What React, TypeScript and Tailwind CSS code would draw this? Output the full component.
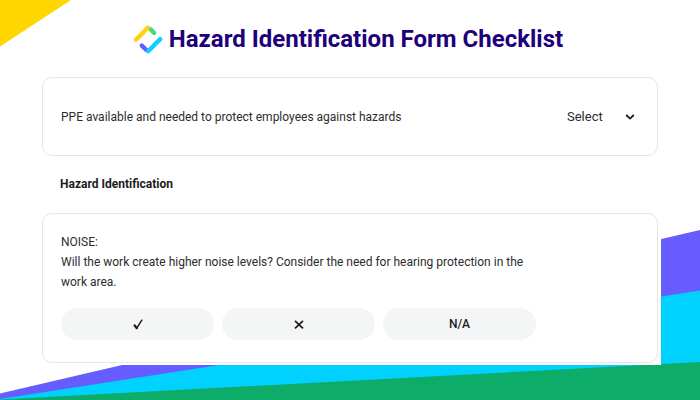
import { useState } from "react";

const answers = [
  { id: "yes", label: "Yes" },
  { id: "no", label: "No" },
  { id: "na", label: "N/A" },
];

function Backdrop() {
  return (
    <svg
      className="absolute inset-0 h-full w-full"
      viewBox="0 0 700 400"
      preserveAspectRatio="none"
      aria-hidden="true"
    >
      <path d="M0 0H71L0 46.5Z" fill="#ffd600" />
      <path d="M0 393.5L700 230V400H0Z" fill="#675cff" />
      <path d="M0 399L700 290.5V400H0Z" fill="#00d1ff" />
      <path d="M0 399.5L700 362V400H0Z" fill="#0dad69" />
    </svg>
  );
}

function Logo() {
  return (
    <svg
      width="30"
      height="30"
      viewBox="0 0 30 30"
      fill="none"
      strokeWidth="4.4"
      strokeLinecap="round"
      aria-hidden="true"
    >
      <path d="M17.6 5.4L21.2 9" stroke="#3ddc7c" />
      <path d="M3 15.8L14.9 3.6" stroke="#ffd111" />
      <path d="M8.8 21.6L13.4 26" stroke="#675cff" />
      <path d="M15.1 27.2L27.2 15.1" stroke="#0fcfff" />
    </svg>
  );
}

function AnswerMark({ id }: { id: string }) {
  if (id === "yes") {
    return (
      <svg width="10" height="12" viewBox="0 0 10 12" fill="none" stroke="#1c1c1c" aria-hidden="true">
        <path d="M1.6 7.4L3.8 10.2" strokeWidth="2.2" strokeLinecap="round" />
        <path d="M3.8 10.2L8.8 2.2" strokeWidth="1.5" strokeLinecap="round" />
      </svg>
    );
  }
  return (
    <svg width="10" height="10" viewBox="0 0 10 10" fill="none" stroke="#1c1c1c" aria-hidden="true">
      <path d="M1 1.8L9 9.4M9 1.8L1 9.4" strokeWidth="1.7" />
    </svg>
  );
}

export default function App() {
  const [ppe, setPpe] = useState("");
  const [noise, setNoise] = useState("");

  return (
    <main className="relative min-h-screen overflow-hidden bg-white font-['Roboto',sans-serif] text-[#2c2c30]">
      <Backdrop />

      <div className="relative">
        <header className="flex h-[74px] items-center justify-center pt-1 pr-1">
          <div className="flex items-center gap-1.5">
            <Logo />
            <h1 className="text-2xl font-bold text-[#20007a]">
              Hazard Identification Form Checklist
            </h1>
          </div>
        </header>

        <div className="mx-[39px] bg-white px-[3px] pt-[3px] pb-[2px]">
          <section className="flex h-[79px] items-center justify-between rounded-[10px] border border-[#e6e6e6] pr-5 pl-[18px]">
            <label htmlFor="ppe" className="text-xs leading-5">
              PPE available and needed to protect employees against hazards
            </label>
            <div className="relative flex items-center">
              <select
                id="ppe"
                value={ppe}
                onChange={(e) => setPpe(e.target.value)}
                className="w-[70px] cursor-pointer appearance-none bg-transparent text-[13px] leading-5"
              >
                <option value="">Select</option>
                <option value="yes">Yes</option>
                <option value="no">No</option>
              </select>
              <svg
                className="pointer-events-none absolute right-0.5"
                width="10"
                height="8"
                viewBox="0 0 10 8"
                fill="none"
                stroke="#1c1c1c"
                strokeWidth="1.8"
                aria-hidden="true"
              >
                <path d="M1.2 2L5 5.6L8.8 2" />
              </svg>
            </div>
          </section>

          <h2 className="py-[18px] pl-[18px] text-xs leading-[21px] font-bold text-[#1c1c1e]">
            Hazard Identification
          </h2>

          <section className="rounded-[10px] border border-[#e6e6e6] px-[18px] pt-[18px] pb-[22px]">
            <p id="noise" className="max-w-[490px] text-xs leading-5">
              NOISE:
              <br />
              Will the work create higher noise levels? Consider the need for
              hearing protection in the work area.
            </p>
            <div role="group" aria-labelledby="noise" className="mt-4 flex gap-2">
              {answers.map((answer) => (
                <button
                  key={answer.id}
                  type="button"
                  aria-label={answer.label}
                  aria-pressed={noise === answer.id}
                  onClick={() => setNoise(answer.id)}
                  className="flex h-8 max-w-[153px] flex-1 items-center justify-center rounded-full bg-[#f4f5f5] text-xs font-medium text-[#1c1c1e]"
                >
                  {answer.id === "na" ? answer.label : <AnswerMark id={answer.id} />}
                </button>
              ))}
            </div>
          </section>
        </div>
      </div>
    </main>
  );
}
